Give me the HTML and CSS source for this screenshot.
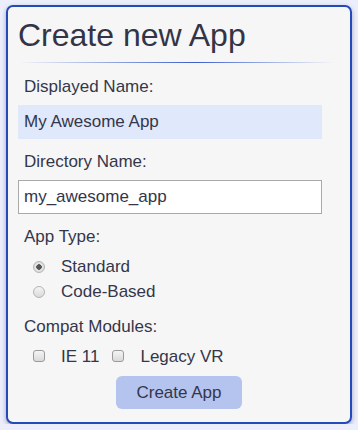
FILE: index.html
```html
<!DOCTYPE html>
<html lang="en">

<head>
    <meta charset="UTF-8">
    <meta name="viewport" content="width=device-width, initial-scale=1.0">
    <title>Create new App</title>
    <link rel="stylesheet" href="styles.css">
</head>

<body>
    <form class="card">
        <h1>Create new App</h1>
        <hr class="divider">

        <label class="field-label" for="display-name">Displayed Name:</label>
        <input class="text-input filled" id="display-name" type="text" value="My Awesome App">

        <label class="field-label gap" for="dir-name">Directory Name:</label>
        <input class="text-input" id="dir-name" type="text" value="my_awesome_app">

        <div class="field-label gap">App Type:</div>
        <div class="radio-list">
            <label class="option"><input type="radio" name="type" checked><span>Standard</span></label>
            <label class="option"><input type="radio" name="type"><span>Code-Based</span></label>
        </div>

        <div class="field-label modules">Compat Modules:</div>
        <div class="check-row">
            <label class="option"><input type="checkbox"><span>IE 11</span></label>
            <label class="option"><input type="checkbox"><span>Legacy VR</span></label>
        </div>

        <div class="actions">
            <button class="button" type="button">Create App</button>
        </div>
    </form>
</body>

</html>
```

FILE: styles.css
```css
body {
    background-color: #eceffb;
    color: #34364a;
    font-family: 'Liberation Sans', Arial, sans-serif;
    font-size: 17px;
    line-height: 20px;
    margin: 0;
    padding: 5px 6px 0;
}

.card {
    display: flex;
    flex-direction: column;
    align-items: flex-start;
    background: #f6f6f6;
    border: 2px solid #2449bb;
    border-radius: 7px;
    box-shadow: 0 2px 5px rgba(20, 30, 80, 0.35);
    padding: 10px 10px 13px;
}

h1 {
    font-size: 32px;
    line-height: 37px;
    font-weight: normal;
    color: #333446;
    margin: 0;
}

.divider {
    align-self: stretch;
    height: 1px;
    border: 0;
    margin: 8px 0 0;
    background: linear-gradient(90deg, rgba(61, 95, 204, 0), #3d5fcc 55%, rgba(61, 95, 204, 0) 98%);
}

.field-label {
    margin: 14px 0 8px 6px;
}

.field-label.gap {
    margin-top: 13px;
}

.field-label.modules {
    margin-top: 15px;
    margin-bottom: 10px;
}

.text-input {
    width: 304px;
    height: 34px;
    box-sizing: border-box;
    padding: 0 5px;
    font-family: inherit;
    font-size: 17px;
    color: #34364a;
    background: #ffffff;
    border: 1px solid #a9a9a9;
    margin: 0;
}

.text-input.filled {
    background: #e0e8fb;
    border-color: #e0e8fb;
}

.radio-list {
    display: flex;
    flex-direction: column;
    gap: 5px;
    margin-top: 2px;
}

.check-row {
    display: flex;
    gap: 13px;
}

.option {
    display: flex;
    align-items: center;
    gap: 16px;
    padding-left: 15px;
}

.check-row .option + .option {
    padding-left: 0;
}

.option input {
    appearance: none;
    margin: 0;
    width: 12px;
    height: 12px;
    box-sizing: border-box;
    border: 1px solid #b4b4b4;
    background: linear-gradient(#f4f4f4, #dadada);
}

.option input[type="radio"] {
    border-radius: 50%;
}

.option input[type="radio"]:checked {
    background: radial-gradient(circle, #555 0, #555 2.5px, #e6e6e6 3px, #d8d8d8 6px);
}

.option input[type="checkbox"] {
    border-radius: 3px;
    border-color: #9a9a9a;
    margin-top: -3px;
}

.actions {
    align-self: stretch;
    display: flex;
    justify-content: center;
    margin-top: 9px;
}

.button {
    font-family: inherit;
    font-size: 17px;
    color: #34364a;
    background: #b5c3ef;
    border: 0;
    border-radius: 6px;
    width: 126px;
    height: 33px;
    padding: 0;
    cursor: pointer;
}
```
